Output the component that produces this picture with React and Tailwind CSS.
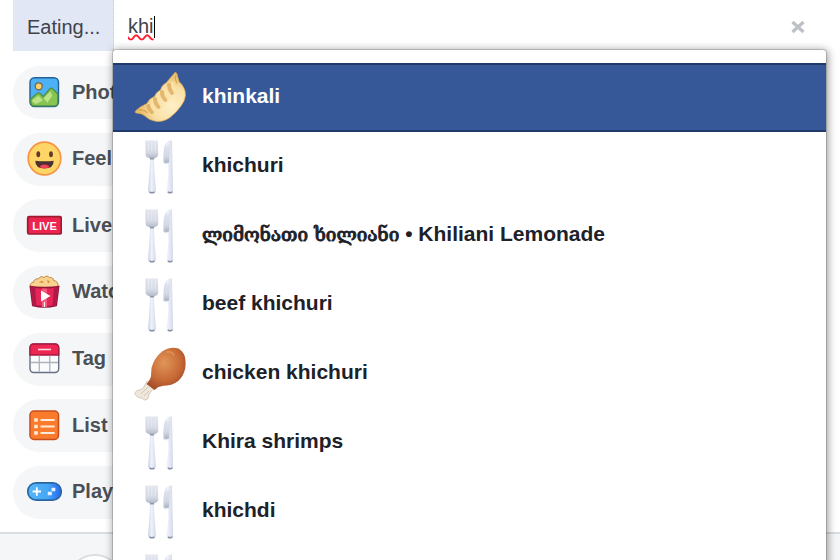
import React, { useState } from 'react';

function PhotoIcon() {
  return (
    <svg viewBox="0 0 36 36" className="size-9" aria-hidden="true">
      <rect x="4" y="3.7" width="28.5" height="28.8" rx="4.5" fill="#4cb2f5" stroke="#245f96" strokeWidth="1.4" />
      <path d="M4.8 25 11 19.5q1.5-1.2 3 0l3.2 3.2 6.5-7.7q1.6-1.5 3.2 0l4.9 5v8.6q0 3.3-3.5 3.3H8q-3.2 0-3.2-3.3z" fill="#87c451" stroke="#4c9048" strokeWidth="1.3" />
      <path d="m5.5 27 5.8-4.6q1-.7 2 0l3.5 4.2-7 3.4zM17.5 24l7-6.5 1.8 4.3-5 7z" fill="#bce386" />
      <circle cx="12.7" cy="12.3" r="3.5" fill="#ffd36b" stroke="#785f4a" strokeWidth="1.3" />
    </svg>
  );
}

function SmileIcon() {
  return (
    <svg viewBox="0 0 36 36" className="size-9" aria-hidden="true">
      <circle cx="18.5" cy="18.5" r="16.3" fill="#ffd566" stroke="#f99445" strokeWidth="1.7" />
      <ellipse cx="12.3" cy="14.2" rx="1.9" ry="3" fill="#613b2c" />
      <ellipse cx="25" cy="14.2" rx="1.9" ry="3" fill="#613b2c" />
      <path d="M9.3 20.8q9.2 1 18.4 0 0 7.8-9.2 7.8t-9.2-7.8" fill="#4b3034" />
      <path d="M13.5 27.2q1-2.7 5-2.7t5 2.7q-5 2.3-10 0" fill="#f24258" />
    </svg>
  );
}

function LiveIcon() {
  return (
    <svg viewBox="0 0 36 36" className="size-9" aria-hidden="true">
      <rect x="1.7" y="9.7" width="33.6" height="17.3" rx="1.5" fill="#ed244f" stroke="#9b1b31" strokeWidth="1.7" />
      <text x="18.5" y="22.6" textAnchor="middle" fontFamily="Liberation Sans, Arial, sans-serif" fontSize="11" fontWeight="700" fill="#fff">LIVE</text>
    </svg>
  );
}

function PopcornIcon() {
  return (
    <svg viewBox="0 0 36 36" className="size-9" aria-hidden="true">
      <path d="M4.5 14q-1.2-4 3-4.8 1-4 5-3.3 2-3.7 5.5-1.3 2.8-3 5.6.1 3.4-.8 4 2.8 5 .6 4.5 6.5z" fill="#fbd391" stroke="#bf863e" strokeWidth="1" />
      <path d="m13 9.5 3-2 2 2.5zM21 6.5l3 2-2 2z" fill="#d4913d" />
      <path d="M4.2 13.5q14.3 2.5 28.6 0l-2.400 19q-11.900 3-23.800 0z" fill="#e52656" stroke="#96163d" strokeWidth="1.3" />
      <path d="m5 14.2 4 .6 1.5 18.6-3.300-.5zM32 14.2l-4 .6-1.500 18.600 3.300-.5z" fill="#b01a49" />
      <path d="M16 15.5h5v18.500h-5z" fill="#f45a7d" />
      <path d="m15 17.5 9.5 5.5-9.500 5.500z" fill="#fff" />
      <path d="M18.4 29v5" stroke="#fff" />
    </svg>
  );
}

function CalendarIcon() {
  return (
    <svg viewBox="0 0 36 36" className="size-9" aria-hidden="true">
      <rect x="4" y="4" width="28.7" height="28.5" rx="3.7" fill="#fafbfc" stroke="#687183" strokeWidth="1.4" />
      <path d="M4 15V8q0-4 4-4h20.700q4 0 4 4v7z" fill="#ee2752" stroke="#a71840" strokeWidth="1.4" />
      <path d="M12 9.5h13" stroke="#ffd6dc" strokeWidth="1.6" />
      <path d="M4.8 22.5H32M13.3 15.8v16M23.8 15.8v16" stroke="#adb2bb" strokeWidth="1.3" />
    </svg>
  );
}

function ListIcon() {
  return (
    <svg viewBox="0 0 36 36" className="size-9" aria-hidden="true">
      <rect x="4" y="4" width="28.5" height="28.5" rx="4" fill="#f97b2b" stroke="#c84d1d" strokeWidth="1.5" />
      <path d="M14.5 13h14.2M14.5 19.5h14.2M14.5 26h14.2" stroke="#ffeadb" strokeWidth="1.8" />
      <path d="M8.2 13h3.6M8.2 19.5h3.6M8.2 26h3.6" stroke="#ffeadb" strokeWidth="3.4" />
    </svg>
  );
}

function GameIcon() {
  return (
    <svg viewBox="0 0 36 36" className="size-9" aria-hidden="true">
      <defs>
        <linearGradient id="pad"><stop stopColor="#55b6f7" /><stop offset=".6" stopColor="#45a6f5" /><stop offset="1" stopColor="#2765f5" /></linearGradient>
      </defs>
      <rect x="1.8" y="9.8" width="33.4" height="17.3" rx="8.4" fill="url(#pad)" stroke="#2866a1" strokeWidth="1.7" />
      <path d="M10.8 14.3v8.4M6.6 18.5H15" stroke="#fff" strokeWidth="1.8" />
      <path d="M25.5 16.5h3.8M21.8 20.5h4" stroke="#e5f3ff" strokeWidth="3.4" />
    </svg>
  );
}

function DumplingIcon() {
  return (
    <svg viewBox="0 0 54 54" className="size-[54px]" aria-hidden="true">
      <defs>
        <radialGradient id="dough" cx=".72" cy=".68" r=".65"><stop stopColor="#fff0c8" /><stop offset=".6" stopColor="#f9dfa3" /><stop offset="1" stopColor="#e9b966" /></radialGradient>
      </defs>
      <path d="M40 2.5q2-2.500 3 .5l2 7.500q6.500 6 6.500 13.500-.5 6-4.500 11-4.500 6.500-11 11.500-8 5.500-15.500 3.500-5.500-1-9.500-5-2.500-2.500-8.500-3-2.500-.5-.5-2.500Q6 35.500 13 32.500q2-5 7.500-7 1.500-4.500 6-6.500 1-5 6-7.500z" fill="url(#dough)" stroke="#dda650" strokeWidth=".7" />
      <path d="M35 14q0 4 3 8M28 21q0 5 3.500 8M21 28q0 4 3.500 8M14.500 35q0 3 3.500 6" fill="none" stroke="#d39a4a" strokeWidth="4" strokeLinecap="round" opacity=".6" />
      <path d="M38.500 12q0 5 3 9M31.500 19q0 5 3.500 9M24.500 27q0 4 3.500 8M18 34q0 3 3.500 6" fill="none" stroke="#fbe2a8" strokeWidth="3" strokeLinecap="round" opacity=".8" />
      <path d="M41.5 5q-.5 4 1.500 7M5 39q5-.5 8 2.500" fill="none" stroke="#d5a152" strokeWidth="1.2" strokeLinecap="round" />
    </svg>
  );
}

function CutleryIcon() {
  return (
    <svg viewBox="0 0 54 54" className="size-[54px]" aria-hidden="true">
      <defs>
        <linearGradient id="steel"><stop stopColor="#cbd2e1" /><stop offset=".45" stopColor="#eff2fb" /><stop offset="1" stopColor="#d3d9e8" /></linearGradient>
        <linearGradient id="head" x2="0" y2="1"><stop stopColor="#e2e5ee" /><stop offset=".65" stopColor="#d3d8e3" /><stop offset="1" stopColor="#abb2c0" /></linearGradient>
      </defs>
      <path d="M11.300.500h12.500l.5 14q0 3-4.600 3.800l-1.700 1-1.700-1q-4.800-.8-4.800-3.800z" fill="url(#head)" />
      <path d="M14.5 0v11M17.8 0v11M21.1 0v11" stroke="#f0f2f8" strokeWidth=".6" />
      <path d="M16.2 18.5h3.600l1 17 1.200 15q-.2 3-4 3t-4-3l1.200-15z" fill="url(#steel)" />
      <path d="M15.8 18.7h4.400" stroke="#8e97a8" strokeWidth="1.5" />
      <path d="M38 .5h-2.500q-4.500 1.500-5.500 8.500-1 8-.6 14 2.700 2.200 4.700 1l.3 9-1.700 17q0 3.500 3.300 3.500t3.100-3.500z" fill="url(#steel)" />
      <path d="M30 22q2 1.500 5 .5l1.500-18.500q-4 1-5 5z" fill="url(#head)" />
      <path d="M15.5 51.8q2.500 2 5 0M33.800 51.8q2.500 2 4.600 0" fill="none" stroke="#8992a8" strokeWidth="1.5" />
    </svg>
  );
}

function DrumstickIcon() {
  return (
    <svg viewBox="0 0 54 54" className="size-[54px]" aria-hidden="true">
      <defs>
        <radialGradient id="meat" cx=".45" cy=".35" r=".72"><stop stopColor="#e09558" /><stop offset=".55" stopColor="#c96d38" /><stop offset="1" stopColor="#9c4324" /></radialGradient>
      </defs>
      <path d="m13 34 8 6-6 7q0 3-1.500 5-3 2.500-5-.5-4.500-.5-7.500-4-.5-3.500 4-4.500 4-.5 5-3z" fill="#efe7da" stroke="#cec0ad" strokeWidth=".8" />
      <path d="m7 47 7-7M10 49l5-5" stroke="#d2c5b2" strokeWidth="1" />
      <path d="M17.5 21Q20 11 28 4.500 36-1 44.500 1.500 51.500 6 51.500 14q.8 10-4.500 17-5 6.500-14 7.500-8 .5-10 2.500l-2.500 2-8-6q4-4.500 4.500-8z" fill="url(#meat)" />
      <path d="M33 5q5-1 7 3" fill="none" stroke="#f1ae70" strokeWidth="1.5" strokeLinecap="round" opacity=".5" />
    </svg>
  );
}

const actions = [
  { label: 'Photo', Icon: PhotoIcon },
  { label: 'Feel', Icon: SmileIcon },
  { label: 'Live', Icon: LiveIcon },
  { label: 'Watc', Icon: PopcornIcon },
  { label: 'Tag', Icon: CalendarIcon },
  { label: 'List', Icon: ListIcon },
  { label: 'Play', Icon: GameIcon },
];

const suggestions = [
  { label: 'khinkali', Icon: DumplingIcon },
  { label: 'khichuri', Icon: CutleryIcon },
  { native: 'ლიმონათი ხილიანი', label: ' • Khiliani Lemonade', Icon: CutleryIcon },
  { label: 'beef khichuri', Icon: CutleryIcon },
  { label: 'chicken khichuri', Icon: DrumstickIcon },
  { label: 'Khira shrimps', Icon: CutleryIcon },
  { label: 'khichdi', Icon: CutleryIcon },
  { label: '', Icon: CutleryIcon },
];

export default function App() {
  const [query, setQuery] = useState('khi');

  return (
    <main className="relative flex h-screen flex-col overflow-hidden bg-white font-['Liberation_Sans','DejaVu_Sans',sans-serif] text-[20px] text-[#1d2129]">
      <header className="ml-[13px] flex h-[51px] shrink-0 items-stretch">
        <label htmlFor="food" className="flex w-[101px] items-center border-r border-dotted border-[#c5cbd8] bg-[#e2e7f5] pl-3.5 pt-0.5 text-[#3e434b]">
          Eating...
        </label>
        <div className="relative flex flex-1 items-center pl-3.5">
          <input
            id="food"
            type="text"
            spellCheck={false}
            value={query}
            onChange={(e) => setQuery(e.target.value)}
            className="min-w-0 flex-1 bg-transparent text-[#3e434b] underline decoration-[#ff1f2d] decoration-wavy decoration-2 underline-offset-1 outline-none"
          />
          <span className="absolute left-10 top-4 h-[22px] w-px bg-black" />
        </div>
        <button type="button" aria-label="Clear" onClick={() => setQuery('')} className="mr-[34px] flex items-center pt-0.5">
          <svg viewBox="0 0 16 14" className="h-3.5 w-4" aria-hidden="true">
            <path d="m2.5 2 11 10M13.5 2l-11 10" stroke="#bec0c8" strokeWidth="3.2" />
          </svg>
        </button>
      </header>

      <nav className="ml-[13px] mt-[15px] flex h-[453px] w-60 shrink-0 flex-col justify-between">
        {actions.map(({ label, Icon }) => (
          <button key={label} type="button" className="flex h-[53px] items-center gap-[10px] whitespace-nowrap rounded-full bg-[#f5f6f7] pb-0.5 pl-[13px] font-bold text-[#4b4f56]">
            <Icon />
            {label}
          </button>
        ))}
      </nav>

      <footer className="mt-[13px] flex-1 border-t-2 border-[#dadde1] bg-[#f5f6f7] pl-[67px] pt-5">
        <div className="size-14 rounded-full border-2 border-[#dadde1] bg-white" />
      </footer>

      <ul className="absolute left-[113px] right-[14px] top-[50px] rounded-t-[3px] bg-white pt-[13px] shadow-[0_0_0_1px_rgba(0,0,0,0.15),1px_1px_9px_1px_rgba(0,0,0,0.4)]">
        {suggestions.map(({ native, label, Icon }, i) => (
          <li key={i}>
            <button
              type="button"
              aria-label={label ? undefined : 'More'}
              className={
                i === 0
                  ? 'flex h-[69px] w-full items-center gap-[14px] border-y-2 border-[#203a6b] bg-[#365899] pl-[21px] text-left text-[21px] font-bold text-white'
                  : 'flex h-[69px] w-full items-center gap-[14px] pl-[21px] text-left text-[21px] font-bold'
              }
            >
              <Icon />
              <span className="whitespace-pre pb-[3px]">
                {native && <span className="font-['DejaVu_Serif',serif] text-[19px] font-normal leading-none [-webkit-text-stroke:1px_#1d2129]">{native}</span>}
                {label}
              </span>
            </button>
          </li>
        ))}
      </ul>
    </main>
  );
}
